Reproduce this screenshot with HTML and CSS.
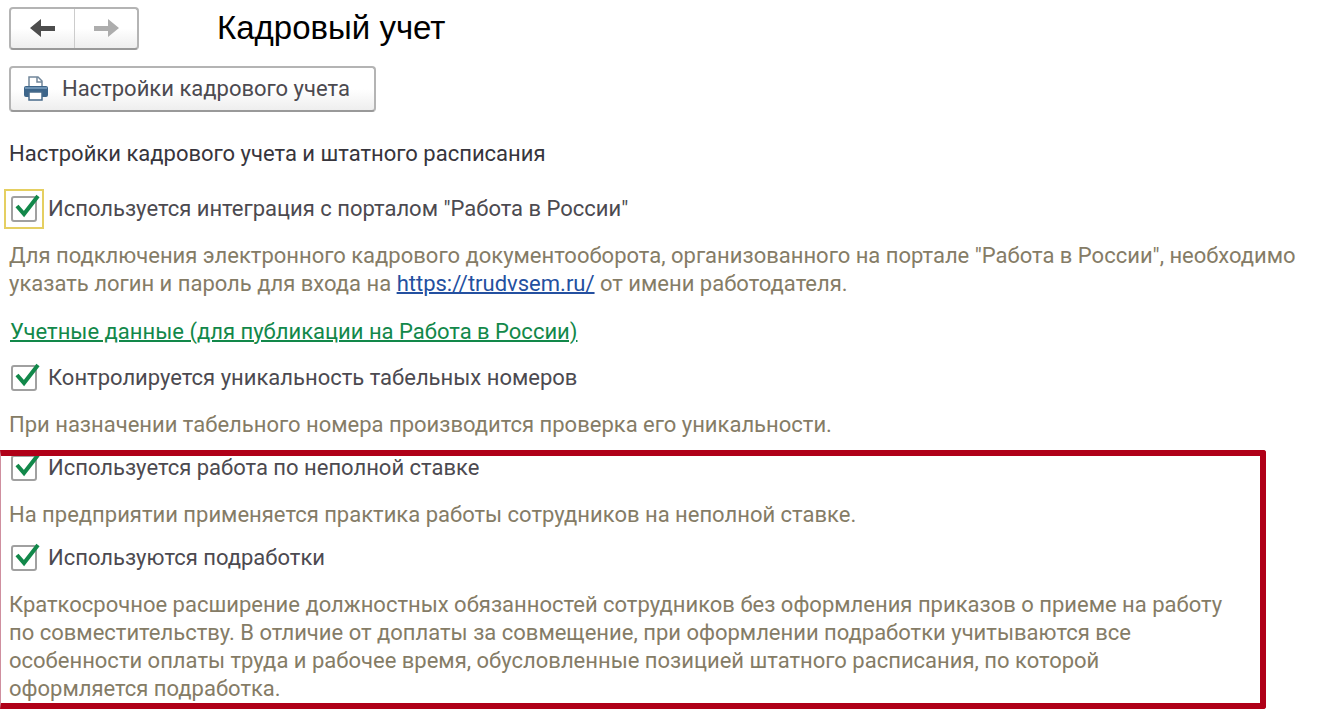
FILE: index.html
```html
<!DOCTYPE html>
<html lang="ru">
<head>
<meta charset="utf-8">
<title>Кадровый учет</title>
<link rel="stylesheet" href="styles.css">
</head>
<body>
<main class="page">
  <header class="head">
    <div class="nav">
      <button class="nav-btn" type="button" aria-label="Назад"><svg class="arrow" viewBox="0 0 26 20"><path d="M0 10L11 1v7h14v5H11v6z" fill="#4d4d4d"/></svg></button>
      <button class="nav-btn" type="button" aria-label="Вперед"><svg class="arrow" viewBox="0 0 26 20"><path d="M26 10L15 1v7H1v5h14v6z" fill="#adadad"/></svg></button>
    </div>
    <h1 class="title">Кадровый учет</h1>
  </header>
  <button class="settings" type="button">
    <svg class="printer" viewBox="0 0 26 26"><path d="M6 10V1h9l4 4v5" fill="#fff" stroke="#71879b" stroke-width="1.5"/><path d="M14 1v5h5" fill="none" stroke="#71879b" stroke-width="1.5"/><rect x="1" y="10" width="24" height="11" rx="2" fill="#3d658a"/><path d="M2 12h22" stroke="#7fa3c2" stroke-width="1.5"/><path d="M6 16h13v8H6z" fill="#fff" stroke="#486b8a" stroke-width="1.5"/></svg>
    <span>Настройки кадрового учета</span>
  </button>
  <h2 class="section">Настройки кадрового учета и штатного расписания</h2>
  <label class="option focused"><span class="box"><input type="checkbox" checked><svg class="tick" viewBox="0 0 30 30"><path d="M7 13l7 8L28 3" fill="none" stroke="#12884a" stroke-width="4"/></svg></span><span>Используется интеграция с порталом "Работа в России"</span></label>
  <p class="hint">Для подключения электронного кадрового документооборота, организованного на портале "Работа в России", необходимо<br>указать логин и пароль для входа на <a class="site" href="https://trudvsem.ru/">https://trudvsem.ru/</a> от имени работодателя.</p>
  <a class="account" href="#account">Учетные данные (для публикации на Работа в России)</a>
  <label class="option"><span class="box"><input type="checkbox" checked><svg class="tick" viewBox="0 0 30 30"><path d="M7 13l7 8L28 3" fill="none" stroke="#12884a" stroke-width="4"/></svg></span><span>Контролируется уникальность табельных номеров</span></label>
  <p class="hint">При назначении табельного номера производится проверка его уникальности.</p>
  <section class="marked">
    <label class="option"><span class="box"><input type="checkbox" checked><svg class="tick" viewBox="0 0 30 30"><path d="M7 13l7 8L28 3" fill="none" stroke="#12884a" stroke-width="4"/></svg></span><span>Используется работа по неполной ставке</span></label>
    <p class="hint">На предприятии применяется практика работы сотрудников на неполной ставке.</p>
    <label class="option"><span class="box"><input type="checkbox" checked><svg class="tick" viewBox="0 0 30 30"><path d="M7 13l7 8L28 3" fill="none" stroke="#12884a" stroke-width="4"/></svg></span><span>Используются подработки</span></label>
    <p class="hint">Краткосрочное расширение должностных обязанностей сотрудников без оформления приказов о приеме на работу<br>по совместительству. В отличие от доплаты за совмещение, при оформлении подработки учитываются все<br>особенности оплаты труда и рабочее время, обусловленные позицией штатного расписания, по которой<br>оформляется подработка.</p>
  </section>
</main>
</body>
</html>
```
FILE: styles.css
```css
* { box-sizing: border-box; }
body { margin: 0; background: #fff; color: #4c4a50; font: 22px/28px Roboto, "Liberation Sans", Arial, sans-serif; }
.page { display: flex; flex-direction: column; align-items: flex-start; padding-top: 6px; white-space: nowrap; }
.head { display: flex; align-items: center; gap: 78px; padding-left: 9px; }
.nav { display: flex; height: 43px; border: 2px solid #b4b4b4; border-bottom-color: #999; border-radius: 4px; background: linear-gradient(#fff 50%, #eee); }
.nav-btn { display: flex; align-items: center; justify-content: center; width: 63px; padding: 0; border: 0; background: transparent; }
.nav-btn + .nav-btn { border-left: 1px solid #ccc; }
.arrow { width: 26px; height: 20px; }
.title { margin: 0; font: 400 33px/44px "Liberation Sans", Arial, sans-serif; color: #000; }
.settings { display: flex; align-items: center; gap: 13px; height: 46px; margin: 16px 0 0 9px; padding: 0 24px 0 12px; border: 2px solid #b4b4b4; border-bottom-color: #999; border-radius: 4px; background: linear-gradient(#fff 50%, #eee); color: #4c4a50; font: inherit; }
.printer { width: 26px; height: 26px; }
.section { margin: 28px 0 23px 9px; font-size: inherit; font-weight: 400; color: #37353c; }
.option { display: flex; align-items: center; height: 36px; padding-left: 6px; gap: 6px; }
.box { position: relative; width: 36px; height: 36px; padding: 5px; }
.box input { appearance: none; display: block; width: 26px; height: 26px; margin: 0; border: 2px solid #a0a0a0; border-radius: 3px; background: #fff; }
.tick { position: absolute; left: 4px; top: 2px; width: 30px; height: 30px; pointer-events: none; }
.focused .box { outline: 2px solid #e5cf61; }
.hint { margin: 15px 0 11px 9px; color: #857c66; }
.site { color: #2450a0; }
.account { margin: 9px 0 14px 10px; color: #12884a; }
.site, .account { text-decoration-thickness: 2px; }
.marked { position: relative; width: 96%; padding-bottom: 6px; }
.marked .hint:last-child { margin-bottom: 0; }
.marked::after { content: ""; position: absolute; inset: 0; border: 6px solid #b00018; border-left: 1px solid #cf8f9f; border-radius: 0 3px 3px 0; pointer-events: none; }
```
